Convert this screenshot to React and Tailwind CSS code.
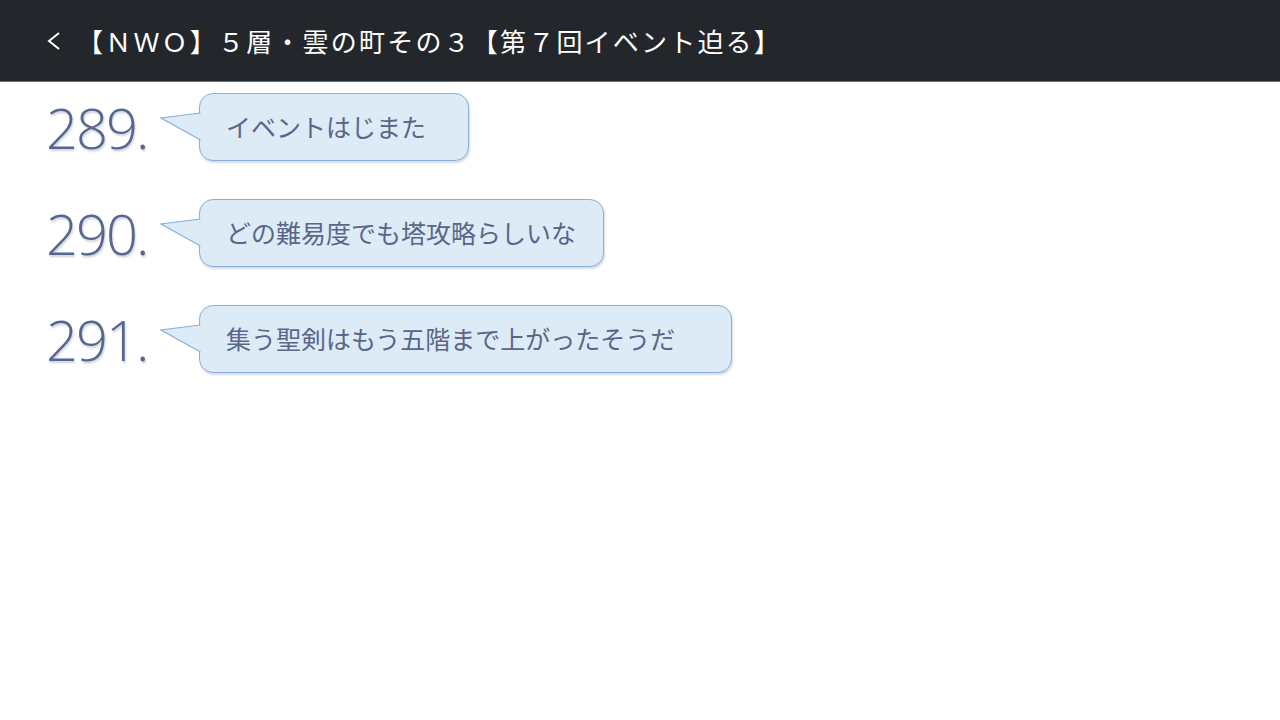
import React from 'react';

const posts = [
  { no: '289.', text: 'イベントはじまた', width: 'w-[270px]' },
  { no: '290.', text: 'どの難易度でも塔攻略らしいな', width: 'w-[405px]' },
  { no: '291.', text: '集う聖剣はもう五階まで上がったそうだ', width: 'w-[533px]' },
];

const Bubble = ({ text, width }) => (
  <div className={`relative ${width} h-[68px]`}>
    <div className="h-full rounded-[14px] border border-[#8db0da] bg-[#dcebf6] shadow-[1px_2px_2px_rgba(90,110,150,0.25)] flex items-center pl-[26px] text-[25px] text-[#5a6688] whitespace-nowrap">
      {text}
    </div>
    {/* tail */}
    <svg className="absolute left-[-39px] top-[18px]" width="42" height="34" viewBox="0 0 42 34">
      <path d="M41 2 L1 7 L41 29 Z" fill="#dcebf6" />
      <path d="M40.5 2 L1 7 L40.5 29" fill="none" stroke="#8db0da" strokeWidth="1.2" />
    </svg>
  </div>
);

export default function App() {
  return (
    <div className="w-[1280px] h-[720px] bg-white overflow-hidden font-['Noto_Sans_CJK_JP','Noto_Sans',sans-serif]">
      <header className="h-[82px] bg-[#23272b] border-b border-[#6b6f73] flex items-center pl-[46px] text-white text-[26px] tracking-[2.2px]">
        <svg className="mr-[16px]" width="15" height="20" viewBox="0 0 15 20">
          <polyline points="13,2 3,10 13,18" fill="none" stroke="#ffffff" strokeWidth="2" />
        </svg>
        <span>【ＮＷＯ】５層・雲の町その３【第７回イベント迫る】</span>
      </header>

      <main className="pt-[11px] flex flex-col gap-[38px]">
        {posts.map((p) => (
          <div key={p.no} className="flex items-center">
            <div className="w-[199px] pl-[46px] -mt-[1px] font-['Open_Sans',sans-serif] font-light text-[56px] leading-none tracking-[-2px] text-[#56668f] [text-shadow:1px_2px_2px_rgba(90,106,150,0.3)]">
              {p.no}
            </div>
            <Bubble text={p.text} width={p.width} />
          </div>
        ))}
      </main>
    </div>
  );
}
